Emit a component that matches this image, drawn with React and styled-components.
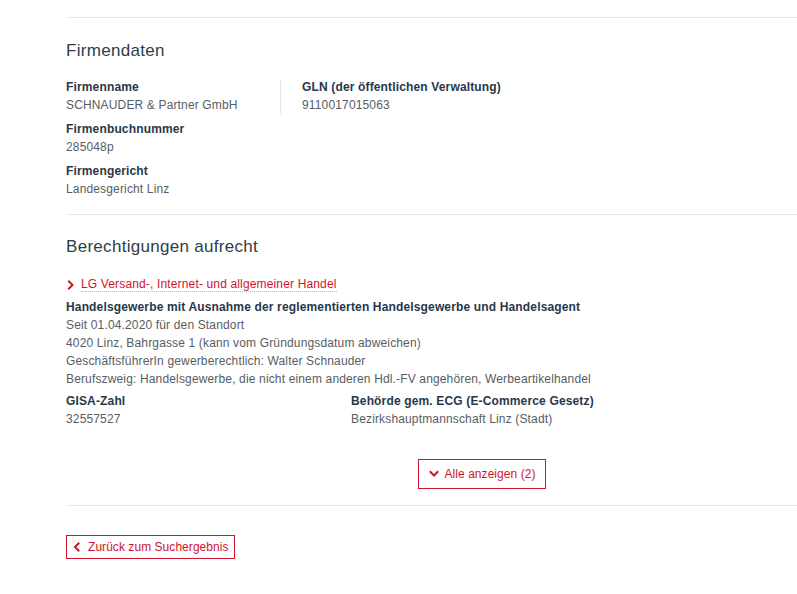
import React from "react";
import styled, { createGlobalStyle } from "styled-components";

const colors = {
    heading: "#2f3d48",
    label: "#27384a",
    text: "#585d62",
    red: "#d0142c",
    line: "#e8e8e8",
};

const GlobalStyle = createGlobalStyle`
    html, body {
        margin: 0;
        padding: 0;
        background: #fff;
        overflow: hidden;
    }
    body {
        font-family: "Liberation Sans", Arial, sans-serif;
        font-size: 12px;
        letter-spacing: 0.15px;
        color: ${colors.text};
    }
`;

const Page = styled.div`
    padding: 17px 0 0 66px;
`;

const Section = styled.section`
    border-top: 1px solid ${colors.line};
    padding: ${(props) => props.padding || "20px 0 15px"};
`;

const Heading = styled.h2`
    margin: 0 0 ${(props) => props.gap || "14px"};
    font-size: 17px;
    line-height: 24px;
    font-weight: normal;
    color: ${colors.heading};
    letter-spacing: 0.3px;
`;

const Columns = styled.div`
    display: flex;
    align-items: flex-start;
`;

const Column = styled.div`
    width: ${(props) => props.width || "auto"};
    display: flex;
    flex-direction: column;
    gap: 6px;
    padding-left: ${(props) => props.indent || "0"};
`;

const Separator = styled.div`
    width: 1px;
    height: 34px;
    margin-top: 2px;
    background: ${colors.line};
`;

const Field = styled.div`
    display: flex;
    flex-direction: column;
`;

const Label = styled.div`
    font-weight: bold;
    color: ${colors.label};
    line-height: 18px;
`;

const Value = styled.div`
    line-height: 18px;
    color: ${colors.text};
`;

const Link = styled.a`
    display: inline-flex;
    align-items: center;
    gap: 5px;
    color: ${colors.red};
    text-decoration: none;
    line-height: 18px;
    margin-bottom: 6px;

    span {
        border-bottom: 1px dotted #f0a0aa;
        line-height: 14px;
    }
`;

const Details = styled.div`
    display: flex;
    flex-direction: column;
    margin-bottom: 4px;
`;

const Center = styled.div`
    display: flex;
    justify-content: center;
    margin-top: 31px;
    padding-left: 101px;
`;

const OutlineButton = styled.button`
    display: inline-flex;
    align-items: center;
    gap: 6px;
    height: ${(props) => props.height || "30px"};
    padding: 0 ${(props) => props.px || "10px"};
    border: 1px solid ${colors.red};
    background: #fff;
    color: ${colors.red};
    font-family: inherit;
    font-size: 12px;
    letter-spacing: 0.05px;
    cursor: pointer;
`;

const Footer = styled.div`
    border-top: 1px solid ${colors.line};
    padding-top: 29px;
`;

const Chevron = ({ dir }) => {
    const paths = {
        right: "M3 1.5 L6.5 5 L3 8.5",
        down: "M1.5 3 L5 6.5 L8.5 3",
        left: "M6.5 1.5 L3 5 L6.5 8.5",
    };
    return (
        <svg width="10" height="10" viewBox="0 0 10 10">
            <path
                d={paths[dir]}
                fill="none"
                stroke={colors.red}
                strokeWidth="2"
                strokeLinecap="square"
            />
        </svg>
    );
};

export default function App() {
    return (
        <Page>
            <GlobalStyle />
            <Section padding="21px 0 16px">
                <Heading gap="15px">Firmendaten</Heading>
                <Columns>
                    <Column width="214px">
                        <Field>
                            <Label>Firmenname</Label>
                            <Value>SCHNAUDER &amp; Partner GmbH</Value>
                        </Field>
                        <Field>
                            <Label>Firmenbuchnummer</Label>
                            <Value>285048p</Value>
                        </Field>
                        <Field>
                            <Label>Firmengericht</Label>
                            <Value>Landesgericht Linz</Value>
                        </Field>
                    </Column>
                    <Separator />
                    <Column indent="21px">
                        <Field>
                            <Label>GLN (der öffentlichen Verwaltung)</Label>
                            <Value>9110017015063</Value>
                        </Field>
                    </Column>
                </Columns>
            </Section>

            <Section padding="20px 0 16px">
                <Heading gap="18px">Berechtigungen aufrecht</Heading>
                <Link href="#">
                    <Chevron dir="right" />
                    <span>LG Versand-, Internet- und allgemeiner Handel</span>
                </Link>
                <Details>
                    <Label>
                        Handelsgewerbe mit Ausnahme der reglementierten
                        Handelsgewerbe und Handelsagent
                    </Label>
                    <Value>Seit 01.04.2020 für den Standort</Value>
                    <Value>
                        4020 Linz, Bahrgasse 1 (kann vom Gründungsdatum
                        abweichen)
                    </Value>
                    <Value>GeschäftsführerIn gewerberechtlich: Walter Schnauder</Value>
                    <Value>
                        Berufszweig: Handelsgewerbe, die nicht einem anderen
                        Hdl.-FV angehören, Werbeartikelhandel
                    </Value>
                </Details>
                <Columns>
                    <Column width="285px">
                        <Field>
                            <Label>GISA-Zahl</Label>
                            <Value>32557527</Value>
                        </Field>
                    </Column>
                    <Column>
                        <Field>
                            <Label>Behörde gem. ECG (E-Commerce Gesetz)</Label>
                            <Value>Bezirkshauptmannschaft Linz (Stadt)</Value>
                        </Field>
                    </Column>
                </Columns>
                <Center>
                    <OutlineButton>
                        <Chevron dir="down" />
                        Alle anzeigen (2)
                    </OutlineButton>
                </Center>
            </Section>

            <Footer>
                <OutlineButton height="24px" px="5px">
                    <Chevron dir="left" />
                    Zurück zum Suchergebnis
                </OutlineButton>
            </Footer>
        </Page>
    );
}
